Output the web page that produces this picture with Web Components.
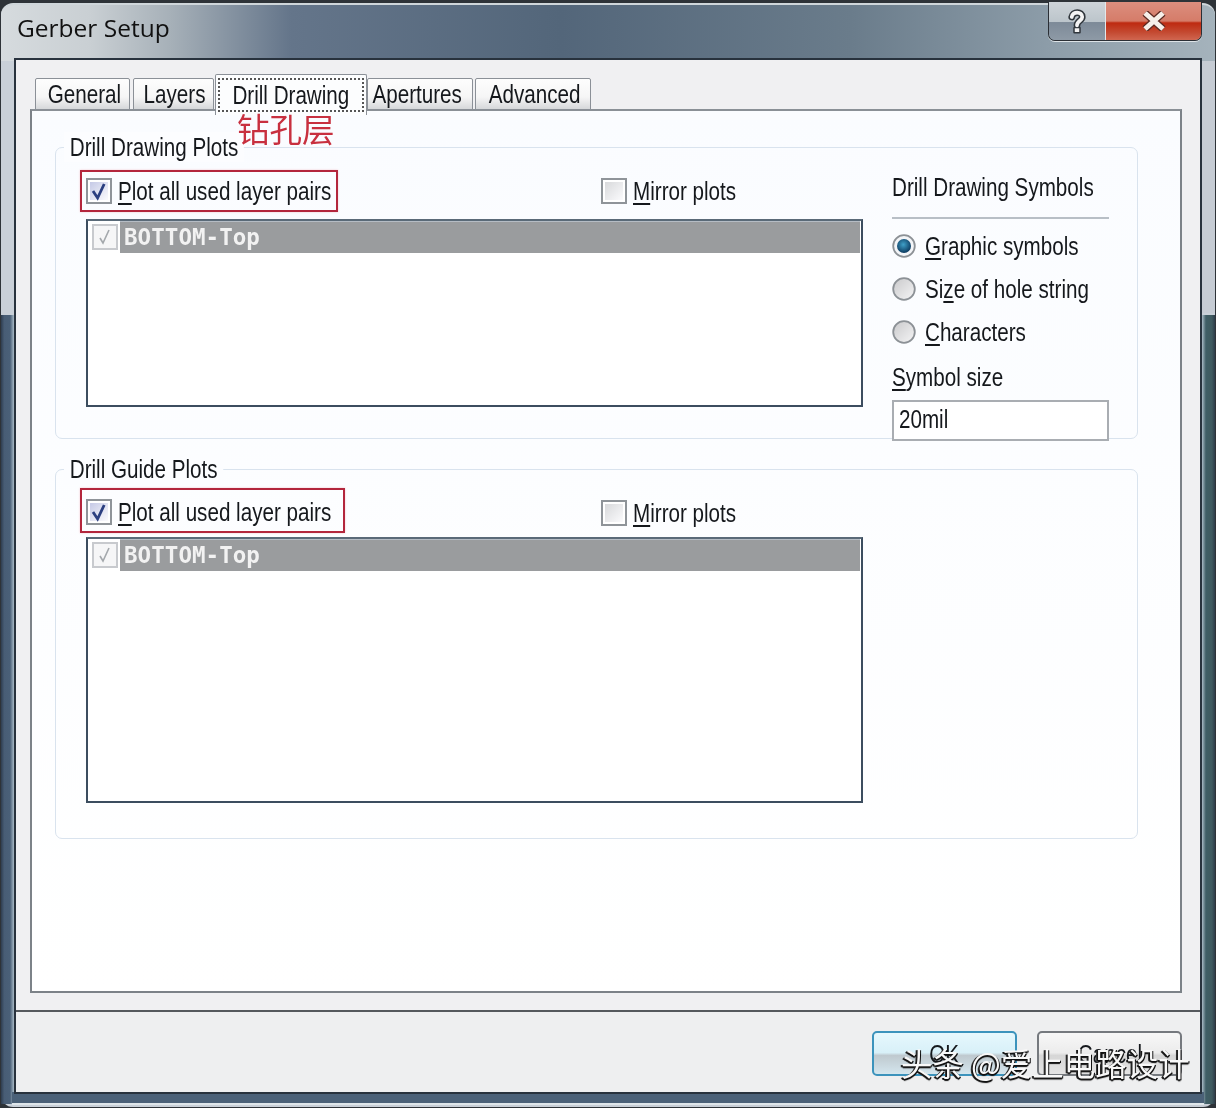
<!DOCTYPE html>
<html><head><meta charset="utf-8"><style>
html,body{margin:0;padding:0;background:#2e3338}
body{width:1216px;height:1108px;overflow:hidden;font-family:"Liberation Sans","Noto Sans CJK SC",sans-serif}
</style></head><body>
<gerber-window title-text="Gerber Setup">
  <tab-strip>
    <tab-item style="width:95px;margin-right:3px;padding-left:3px">General</tab-item>
    <tab-item style="width:81px;margin-right:1px;padding-left:3px">Layers</tab-item>
    <tab-item active style="width:152px">Drill Drawing</tab-item>
    <tab-item style="width:106px;margin-right:2px;padding-right:6px">Apertures</tab-item>
    <tab-item style="width:116px;padding-left:4px">Advanced</tab-item>
  </tab-strip>
  <tab-panel>
    <group-box legend="Drill Drawing Plots" style="height:292px;margin-bottom:30px">
      <plot-block list-height="188" box-width="258"></plot-block>
      <symbol-pane></symbol-pane>
    </group-box>
    <group-box legend="Drill Guide Plots" style="height:370px">
      <plot-block list-height="266" box-width="265" compact></plot-block>
    </group-box>
  </tab-panel>
  <action-bar slot="footer">
    <win-button default>OK</win-button>
    <win-button>Cancel</win-button>
  </action-bar>
</gerber-window>
<script>
const UI='"Liberation Sans",sans-serif';
const NARROW='.n{display:inline-block;transform:scaleX(.825);transform-origin:0 50%}';
const T=(css,html)=>`<style>${NARROW}${css}</style>${html}`;
const base=c=>class extends HTMLElement{constructor(){super();this.attachShadow({mode:'open'})}};
const U=(s,k)=>s.replace(k,`<u>${k}</u>`);

customElements.define('gerber-window',class extends base(){connectedCallback(){
this.shadowRoot.innerHTML=T(`
:host{display:block;position:relative;width:1216px;height:1108px;box-sizing:border-box;overflow:hidden;background:#2e3338;filter:blur(.35px)}
.frame{position:absolute;inset:3px 1px 1px 1px;border-radius:12px;border-top:2px solid #cfd6da;
 background:linear-gradient(90deg,#d6dbde 0,#c9cfd3 90px,#a6b0b8 170px,#64758a 290px,#53667a 560px,#6a7c8b 850px,#8d9da9 1050px,#a5b3bc 1216px) top/100% 56px no-repeat,linear-gradient(90deg,#c9d0d8 0,#c6ccd4 100%)}
.leftlow,.rightlow{position:absolute;top:313px;bottom:4px;width:13px;border-top:2px solid #c9d0d8}
.leftlow{left:1px;background:linear-gradient(90deg,#2e3d50,#485d75 25%,#4a6078 70%,#a9bac6)}
.rightlow{right:1px;background:linear-gradient(270deg,#2e3d4a,#3f5a5f 25%,#3f5e66 70%,#a9bac6)}
.lowbar{position:absolute;left:12px;right:12px;bottom:3px;height:11px;background:#4b6178;border-bottom:2px solid #dfe6ea}
.layout{position:absolute;inset:0;display:flex;flex-direction:column}
.title{height:58px;flex:none;box-sizing:border-box;padding:11px 0 0 17px;font:24.5px/34px "Open Sans",sans-serif;color:#111}
.client{margin:0 14px 14px 14px;flex:1;min-height:0;display:flex;flex-direction:column;border:2px solid #28323d;background:#f0f0f2;box-sizing:border-box}
.body{flex:1;box-sizing:border-box;padding:14px 18px 17px 14px;display:flex;flex-direction:column;min-height:0;border-bottom:2px solid #55595d}
.foot{height:80px;flex:none;background:#eeeff0}
.caps{position:absolute;top:2px;right:14px;width:152px;height:38px;display:flex;border:1px solid #2b2f35;border-top:0;border-radius:0 0 7px 7px;overflow:hidden;box-shadow:0 1px 0 #dde3e7}
.cap{display:flex;align-items:center;justify-content:center}
.help{width:56px;border-right:1px solid #e4e8ea;background:linear-gradient(180deg,#ced4d9 0,#bcc5cb 52%,#7d8a98 54%,#8e9aa6 100%)}
.close{flex:1;background:linear-gradient(180deg,#dc8e7e 0,#d57c69 50%,#be2a10 55%,#c44a32 80%,#d06650 100%)}
svg{display:block}
`,`<div class="frame"></div><div class="leftlow"></div><div class="rightlow"></div><div class="lowbar"></div>
<div class="layout"><div class="title">${this.getAttribute('title-text')}</div>
<div class="client"><div class="body"><slot></slot></div><div class="foot"><slot name="footer"></slot></div></div></div>
<div class="caps"><div class="cap help"><svg width="18" height="27" viewBox="0 0 24 34"><path d="M5 11C6 3 19 3 19 11c0 5-7 5-7 11" fill="none" stroke="#30363c" stroke-width="9" stroke-linecap="round"/><rect x="7" y="24" width="10" height="9" rx="1.5" fill="#30363c"/><path d="M5 11C6 3 19 3 19 11c0 5-7 5-7 11" fill="none" stroke="#f4f4f4" stroke-width="5" stroke-linecap="round"/><rect x="9" y="26" width="6" height="5" fill="#f4f4f4"/></svg></div>
<div class="cap close"><svg width="24" height="20" viewBox="0 0 24 20"><path d="M3 2l18 16M21 2L3 18" stroke="#5d2a22" stroke-width="7.5"/><path d="M3 2l18 16M21 2L3 18" stroke="#f6efe9" stroke-width="5"/></svg></div></div>
<annot-label>钻孔层</annot-label>
<water-mark>头条 @爱上电路设计</water-mark>`);
}});

customElements.define('annot-label',class extends base(){connectedCallback(){this.shadowRoot.innerHTML=T(`:host{position:absolute;left:237px;top:106px;font:32.5px/44px "Noto Sans CJK SC",sans-serif;color:#c8303f;z-index:3}`,`<slot></slot>`)}});
customElements.define('water-mark',class extends base(){connectedCallback(){this.shadowRoot.innerHTML=T(`:host{position:absolute;left:901px;top:1040px;font:31.5px/44px "Noto Sans CJK SC",sans-serif;color:#f8f8f8;z-index:5;white-space:nowrap;text-shadow:-1px 1px 0 #111,1px 1px 0 #111,-2px 1px 0 #333,0 2px 1px #111}`,`<slot></slot>`)}});

customElements.define('tab-strip',class extends base(){connectedCallback(){this.shadowRoot.innerHTML=T(`:host{display:flex;align-items:flex-end;height:36px;padding-left:5px;position:relative;z-index:2;margin-bottom:-1px}`,`<slot></slot>`)}});
customElements.define('tab-item',class extends base(){connectedCallback(){const a=this.hasAttribute('active');this.shadowRoot.innerHTML=T(`
:host{display:flex;box-sizing:border-box;height:${a?'41px':'32px'};justify-content:center;align-items:${a?'stretch':'center'};font:25px/30px ${UI};color:#15181c;
 border:1px solid #8b9097;border-bottom:${a?'0':'1px solid #8b9097'};margin-bottom:${a?'-5px':'0'};border-radius:2px 2px 0 0;flex:none;
 background:${a?'#fcfdfe':'linear-gradient(180deg,#fdfdfd 0,#f6f6f6 60%,#d6d8da 100%)'}}
.n{transform-origin:50% 50%}
.f{box-sizing:border-box;flex:${a?'1':'none'};text-align:center;margin:${a?'3px 4px 3px':'0'};border:${a?'2px dotted #555':'0'};line-height:${a?'30px':'inherit'};white-space:nowrap}`,`<div class="f"><span class="n"><slot></slot></span></div>`)}});
customElements.define('tab-panel',class extends base(){connectedCallback(){this.shadowRoot.innerHTML=T(`:host{display:block;flex:1;box-sizing:border-box;border:2px solid #7c8288;border-top-color:#8a9096;background:linear-gradient(180deg,#fafcff,#ffffff);padding:36px 42px 0 23px;min-height:0}`,`<slot></slot>`)}});

customElements.define('group-box',class extends base(){connectedCallback(){this.shadowRoot.innerHTML=T(`
:host{display:flex;box-sizing:border-box;position:relative;border:1px solid #d9e3ee;border-radius:7px;padding:22px 0 0 24px;gap:29px}
.l{position:absolute;left:8px;top:-16px;background:#fcfdff;padding:0 7px;font:25px/30px ${UI};color:#15181c;white-space:nowrap}`,`<div class="l n">${this.getAttribute('legend')}</div><slot></slot>`)}});

customElements.define('check-box',class extends base(){connectedCallback(){const c=this.hasAttribute('checked');this.shadowRoot.innerHTML=T(`:host{display:block;flex:none;width:26px;height:26px}`,
`<svg width="26" height="26" viewBox="0 0 26 26"><defs><linearGradient id="g" x1="0" y1="0" x2="1" y2="1"><stop offset="0" stop-color="${c?'#c5c9e6':'#d8d9db'}"/><stop offset="1" stop-color="#fbfbfd"/></linearGradient></defs><rect x="1" y="1" width="24" height="24" fill="#fff" stroke="#8f9499" stroke-width="2"/><rect x="4" y="4" width="18" height="18" fill="url(#g)"/>${c?'<path d="M7 13l4.6 7 6.6-14" fill="none" stroke="#2b3f80" stroke-width="2.8"/>':''}</svg>`)}});
customElements.define('radio-dot',class extends base(){connectedCallback(){const c=this.hasAttribute('checked');this.shadowRoot.innerHTML=T(`:host{display:block;flex:none;width:24px;height:24px}`,
`<svg width="24" height="24" viewBox="0 0 24 24"><defs><radialGradient id="o" cx=".45" cy=".4" r=".6"><stop offset="0" stop-color="#3fa0c8"/><stop offset="1" stop-color="#0c3a60"/></radialGradient><linearGradient id="e" x1="0" y1="0" x2="1" y2="1"><stop offset="0" stop-color="#c9c9cb"/><stop offset="1" stop-color="#f5f5f6"/></linearGradient></defs><circle cx="12" cy="12" r="10.8" fill="${c?'#f3f5f8':'url(#e)'}" stroke="#8c9196" stroke-width="1.8"/>${c?'<circle cx="12" cy="12" r="7" fill="url(#o)"/>':''}</svg>`)}});

customElements.define('check-line',class extends base(){connectedCallback(){const b=this.getAttribute('box');const k=this.getAttribute('key');const t=this.getAttribute('text');const p=+(this.getAttribute('pad')||0);this.shadowRoot.innerHTML=T(`
:host{display:flex;align-items:center;box-sizing:border-box;gap:6px;${b?`width:${b}px;border:2px solid #b3263c;padding:${p}px 0 0 4px;box-shadow:0 0 2px #f3c6cc;`:`height:26px;`}font:25px/30px ${UI};color:#15181c;white-space:nowrap}
u{text-underline-offset:3px;text-decoration-thickness:2px}`,`<check-box ${this.hasAttribute('checked')?'checked':''}></check-box><span class="n">${U(t,k)}</span>`)}});

customElements.define('plot-block',class extends base(){connectedCallback(){const w=this.getAttribute('box-width'),h=this.getAttribute('list-height'),c=this.hasAttribute('compact');this.shadowRoot.innerHTML=T(`
:host{display:block;width:783px;flex:none;margin-top:${c?'-4px':'0'}}
.top{display:flex;align-items:center;justify-content:space-between;height:${c?45:42}px;margin-bottom:${c?4:7}px}
.top>.b{height:100%}
.mir{width:263px;flex:none;margin-right:-1px;margin-top:${c?'5px':'0'}}`,`<div class="top"><check-line class="b" checked box="${w}" pad="${c?3:0}" text="Plot all used layer pairs" key="P"></check-line><check-line class="mir" text="Mirror plots" key="M"></check-line></div>
<layer-list style="height:${h}px"></layer-list>`)}});

customElements.define('layer-list',class extends base(){connectedCallback(){this.shadowRoot.innerHTML=T(`
:host{display:block;box-sizing:border-box;margin-left:6px;width:777px;border:2px solid #3c4d5f;border-top-color:#5a6a78;background:#fff;padding:0 0 0 4px}
.row{display:flex;height:32px;align-items:center;gap:2px}
.c{flex:none;width:26px;height:26px;box-sizing:border-box;border:2px solid #c8cace;background:#f6f6f7}
.c svg{display:block;margin:2px}
.t{flex:1;box-sizing:border-box;margin-right:1px;height:32px;background:#9a9c9e;box-shadow:inset 0 1px #b5bcc4;color:#f2f2f2;font:bold 22.5px/32px "DejaVu Sans Mono","Liberation Mono",monospace;letter-spacing:.05px;padding-left:4px;white-space:nowrap}`,
`<div class="row"><div class="c"><svg width="18" height="18" viewBox="0 0 18 18"><path d="M4 10l3 5 6-13" fill="none" stroke="#a4a8ac" stroke-width="1.6"/></svg></div><div class="t">BOTTOM-Top</div></div>`)}});

customElements.define('symbol-pane',class extends base(){connectedCallback(){this.shadowRoot.innerHTML=T(`
:host{display:flex;flex-direction:column;width:217px;flex:none;margin-top:2px;font:25px/30px ${UI};color:#15181c;white-space:nowrap}
.h{flex:none;height:30px;padding-bottom:15px;border-bottom:2px solid #b8bfc6;margin-bottom:12px}
.r{flex:none;display:flex;align-items:center;gap:9px;height:30px;margin-bottom:13px}
u{text-underline-offset:3px;text-decoration-thickness:2px}
.s{flex:none;height:30px;margin-top:2px;margin-bottom:8px}
.i{flex:none;box-sizing:border-box;width:217px;height:41px;border:2px solid #a9adb2;background:#fff;padding-left:5px;line-height:34px}`,
`<div class="h"><span class="n">Drill Drawing Symbols</span></div>
<div class="r"><radio-dot checked></radio-dot><span class="n">${U('Graphic symbols','G')}</span></div>
<div class="r"><radio-dot></radio-dot><span class="n">Si<u>z</u>e of hole string</span></div>
<div class="r"><radio-dot></radio-dot><span class="n">${U('Characters','C')}</span></div>
<div class="s"><span class="n">${U('Symbol size','S')}</span></div><div class="i"><span class="n">20mil</span></div>`)}});

customElements.define('action-bar',class extends base(){connectedCallback(){this.shadowRoot.innerHTML=T(`:host{display:flex;justify-content:flex-end;gap:20px;padding:19px 18px 0 0}`,`<slot></slot>`)}});
customElements.define('win-button',class extends base(){connectedCallback(){const d=this.hasAttribute('default');this.shadowRoot.innerHTML=T(`.n{transform-origin:50% 50%}:host{display:flex;align-items:center;justify-content:center;width:145px;height:45px;box-sizing:border-box;border-radius:5px;font:25px/30px ${UI};color:#15181c;border:2px solid ${d?'#3c93bc':'#75797e'};background:linear-gradient(180deg,${d?'#e6f8fd 0,#d8f0f8 48%,#bfc9cf 55%,#d4e6ee 100%':'#f7f7f7 0,#ececec 48%,#d6d6d6 55%,#e4e4e4 100%'})}`,`<span class="n"><slot></slot></span>`)}});
</script>
</body></html>
